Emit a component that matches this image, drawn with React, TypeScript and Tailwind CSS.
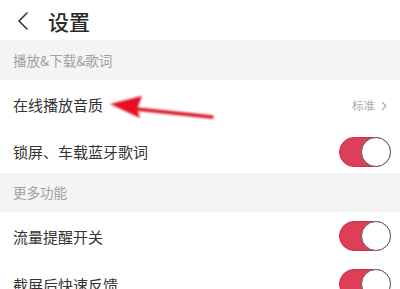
import React from "react";

const font = { fontFamily: '"Noto Sans CJK SC", "Noto Sans", sans-serif' };

function Toggle() {
  return (
    <div className="relative w-[52px] h-[30px] rounded-full bg-[#dd3f58] border border-[#b8384c]">
      <div className="absolute right-[-1px] top-[-1px] w-[30px] h-[30px] rounded-full bg-white border-[1.5px] border-[#6b5a5e]" />
    </div>
  );
}

function Section({ label, h }: { label: string; h: string }) {
  return (
    <div className={`${h} bg-[#f4f4f4] flex items-center pl-[13px] text-[13.5px] text-[#a0a0a0]`}>
      {label}
    </div>
  );
}

export default function App() {
  return (
    <div className="relative w-[400px] h-[289px] overflow-hidden bg-white" style={font}>
      <div className="h-[40px] flex items-center">
        <svg className="ml-[17px] mt-[2px]" width="12" height="20" viewBox="0 0 12 20">
          <path d="M10 2 L2 10 L10 18" fill="none" stroke="#333" strokeWidth="1.6" strokeLinecap="round" strokeLinejoin="round" />
        </svg>
        <div className="ml-[19px] mt-[2px] text-[21px] font-medium text-[#2a2a2a] leading-none">设置</div>
      </div>
      <Section label="播放&下载&歌词" h="h-[40px]" />
      <div className="h-[48px] flex items-center justify-between pl-[13px] pr-[13px]">
        <span className="text-[15px] text-[#333] mt-[2px]">在线播放音质</span>
        <span className="flex items-center gap-[6px] text-[11.5px] text-[#aaa] mt-[3px]">
          标准
          <svg width="6" height="10" viewBox="0 0 6 10">
            <path d="M1 1 L5 5 L1 9" fill="none" stroke="#aaa" strokeWidth="1.2" />
          </svg>
        </span>
      </div>
      <div className="h-[45px] flex items-center justify-between pl-[13px] pr-[9px]">
        <span className="text-[15px] text-[#333] mt-[4px]">锁屏、车载蓝牙歌词</span>
        <div className="mt-[3px]"><Toggle /></div>
      </div>
      <Section label="更多功能" h="h-[39px]" />
      <div className="h-[48px] flex items-center justify-between pl-[13px] pr-[9px]">
        <span className="text-[15px] text-[#333] mt-[2px]">流量提醒开关</span>
        <Toggle />
      </div>
      <div className="h-[48px] flex items-center justify-between pl-[13px] pr-[9px]">
        <span className="text-[15px] text-[#333] mt-[2px]">截屏后快速反馈</span>
        <Toggle />
      </div>
      <svg className="absolute left-0 top-0 pointer-events-none" width="400" height="289" viewBox="0 0 400 289">
        <defs>
          <filter id="b" x="-20%" y="-50%" width="140%" height="200%">
            <feGaussianBlur stdDeviation="0.8" />
          </filter>
        </defs>
        <g filter="url(#b)">
          <path d="M136 109 L212 117" stroke="#d81520" strokeWidth="3.5" strokeLinecap="round" />
          <path d="M110 104 L142 96 L137 109 L140 118 Z" fill="#ea1020" />
        </g>
      </svg>
    </div>
  );
}
